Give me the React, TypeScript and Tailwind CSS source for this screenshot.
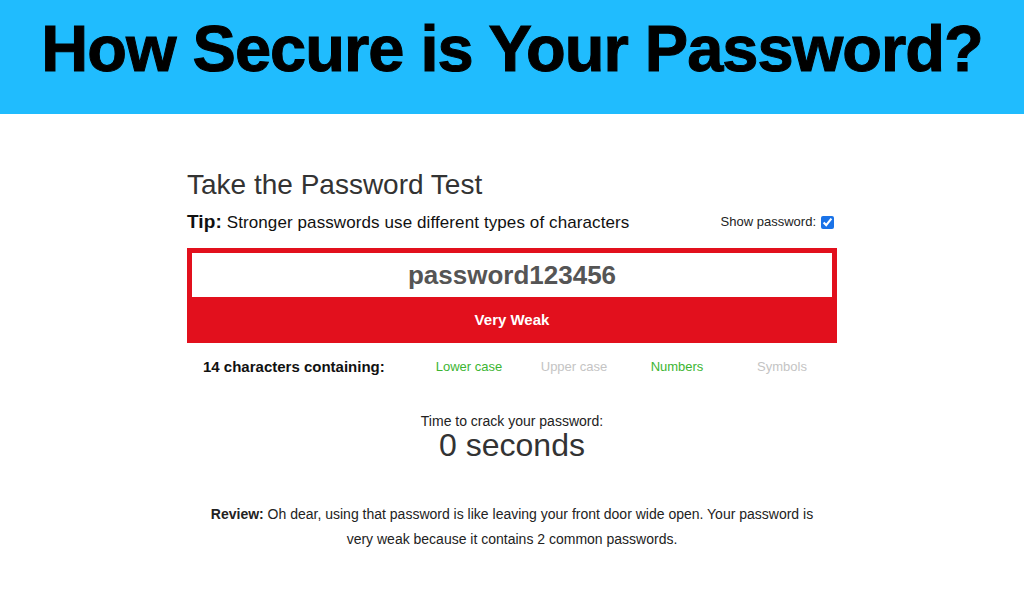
import { useState } from 'react';

const checks = [
  { label: 'Lower case', ok: true, w: 'w-[104px]' },
  { label: 'Upper case', ok: false, w: 'w-[106px]' },
  { label: 'Numbers', ok: true, w: 'w-[100px]' },
  { label: 'Symbols', ok: false, w: 'w-[110px]' },
];

export default function App() {
  const [show, setShow] = useState(true);
  const [pwd, setPwd] = useState('password123456');

  return (
    <div className="w-[1024px] h-[599px] bg-white overflow-hidden font-['Liberation_Sans',Arial,sans-serif]">
      <header className="h-[114px] bg-[#20bcfe] flex items-center justify-center">
        <h1 className="text-[65px] font-bold text-black leading-none tracking-[-1px] -mt-[17px] [-webkit-text-stroke:1px_black]">
          How Secure is Your Password?
        </h1>
      </header>

      <main className="w-[650px] mx-auto pt-[52px]">
        <h2 className="text-[28px] text-[#333] leading-[38px]">Take the Password Test</h2>

        <div className="flex items-center justify-between mt-[5px] h-[26px]">
          <p className="text-[17px] text-[#111] tracking-[0.1px]">
            <span className="font-bold text-[19px]">Tip:</span> Stronger passwords use different types of characters
          </p>
          <label className="flex items-center gap-[5px] text-[13px] text-[#222] mr-[3px]">
            Show password:
            <input
              type="checkbox"
              checked={show}
              onChange={(e) => setShow(e.target.checked)}
              className="w-[13px] h-[13px] accent-[#1a73e8]"
            />
          </label>
        </div>

        <div className="mt-[13px] bg-[#e2101d] p-[5px] pb-0">
          <input
            type={show ? 'text' : 'password'}
            value={pwd}
            onChange={(e) => setPwd(e.target.value)}
            className="w-full h-[44px] bg-white text-center text-[26px] font-bold text-[#555] outline-none"
          />
          <div className="h-[46px] flex items-center justify-center text-white font-bold text-[15px]">
            Very Weak
          </div>
        </div>

        <div className="flex items-center mt-[13px] h-[22px]">
          <span className="w-[230px] pl-[16px] font-bold text-[15px] text-[#111]">
            {pwd.length} characters containing:
          </span>
          {checks.map((c) => (
            <span key={c.label} className={`${c.w} text-center text-[13px] ${c.ok ? 'text-[#3cb532]' : 'text-[#c4c4c4]'}`}>
              {c.label}
            </span>
          ))}
        </div>

        <div className="text-center mt-[34px]">
          <p className="text-[14px] text-[#222] leading-[18px]">Time to crack your password:</p>
          <p className="text-[32px] text-[#333] leading-[30px]">0 seconds</p>
        </div>

        <p className="text-center text-[14px] text-[#222] leading-[25px] mt-[42px] px-[12px]">
          <span className="font-bold">Review:</span> Oh dear, using that password is like leaving your front door wide open. Your password is very weak because it contains 2 common passwords.
        </p>
      </main>
    </div>
  );
}
